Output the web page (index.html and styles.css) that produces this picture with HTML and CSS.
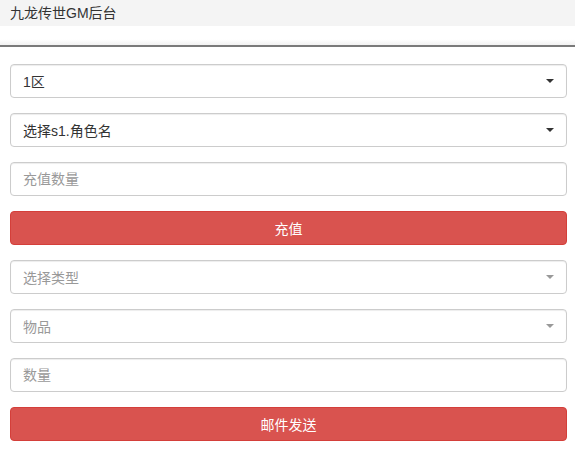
FILE: index.html
```html
<!DOCTYPE html>
<html>
<head>
<meta charset="utf-8">
<link rel="stylesheet" href="styles.css">
</head>
<body>
<div class="header">九龙传世GM后台</div>
<div class="spacer"></div>
<div class="rule"></div>
<form class="form">
  <div class="field select"><span class="val">1区</span><span class="caret"></span></div>
  <div class="field select"><span class="val">选择s1.角色名</span><span class="caret"></span></div>
  <input class="field input" placeholder="充值数量">
  <button type="button" class="btn">充值</button>
  <div class="field select muted"><span class="val">选择类型</span><span class="caret"></span></div>
  <div class="field select muted"><span class="val">物品</span><span class="caret"></span></div>
  <input class="field input" placeholder="数量">
  <button type="button" class="btn">邮件发送</button>
</form>
</body>
</html>
```
FILE: styles.css
```css
* { box-sizing: border-box; }
html, body { margin: 0; padding: 0; background: #fff; }
body {
  font-family: "Liberation Sans", "Noto Sans CJK SC", sans-serif;
  font-size: 14px;
  color: #333;
}
.header {
  background: #f4f4f4;
  height: 26px;
  line-height: 26px;
  padding-left: 10px;
  font-size: 14px;
  color: #333;
}
.spacer { height: 19px; background: linear-gradient(#fff 70%, #f2f2f2); }
.rule { height: 2px; background: #7a7a7a; }
.form {
  display: flex;
  flex-direction: column;
  gap: 15px;
  padding: 17px 8px 0 10px;
}
.field {
  height: 34px;
  border: 1px solid #ccc;
  border-radius: 4px;
  background: #fff;
  padding: 0 12px;
  font: inherit;
  font-size: 14px;
  color: #555;
  box-shadow: inset 0 1px 1px rgba(0,0,0,.075);
  width: 100%;
}
.select {
  display: flex;
  align-items: center;
  justify-content: space-between;
  color: #333;
}
.select.muted { color: #999; }
.caret {
  width: 0; height: 0;
  border-left: 4px solid transparent;
  border-right: 4px solid transparent;
  border-top: 4px solid #333;
  margin-right: 0;
}
.muted .caret { border-top-color: #999; }
.input { outline: none; }
.input::placeholder { color: #999; }
.btn {
  height: 34px;
  width: 100%;
  background: #d9534f;
  border: 1px solid #d43f3a;
  border-radius: 4px;
  color: #fff;
  font: inherit;
  font-size: 14px;
  padding: 0;
}
```
